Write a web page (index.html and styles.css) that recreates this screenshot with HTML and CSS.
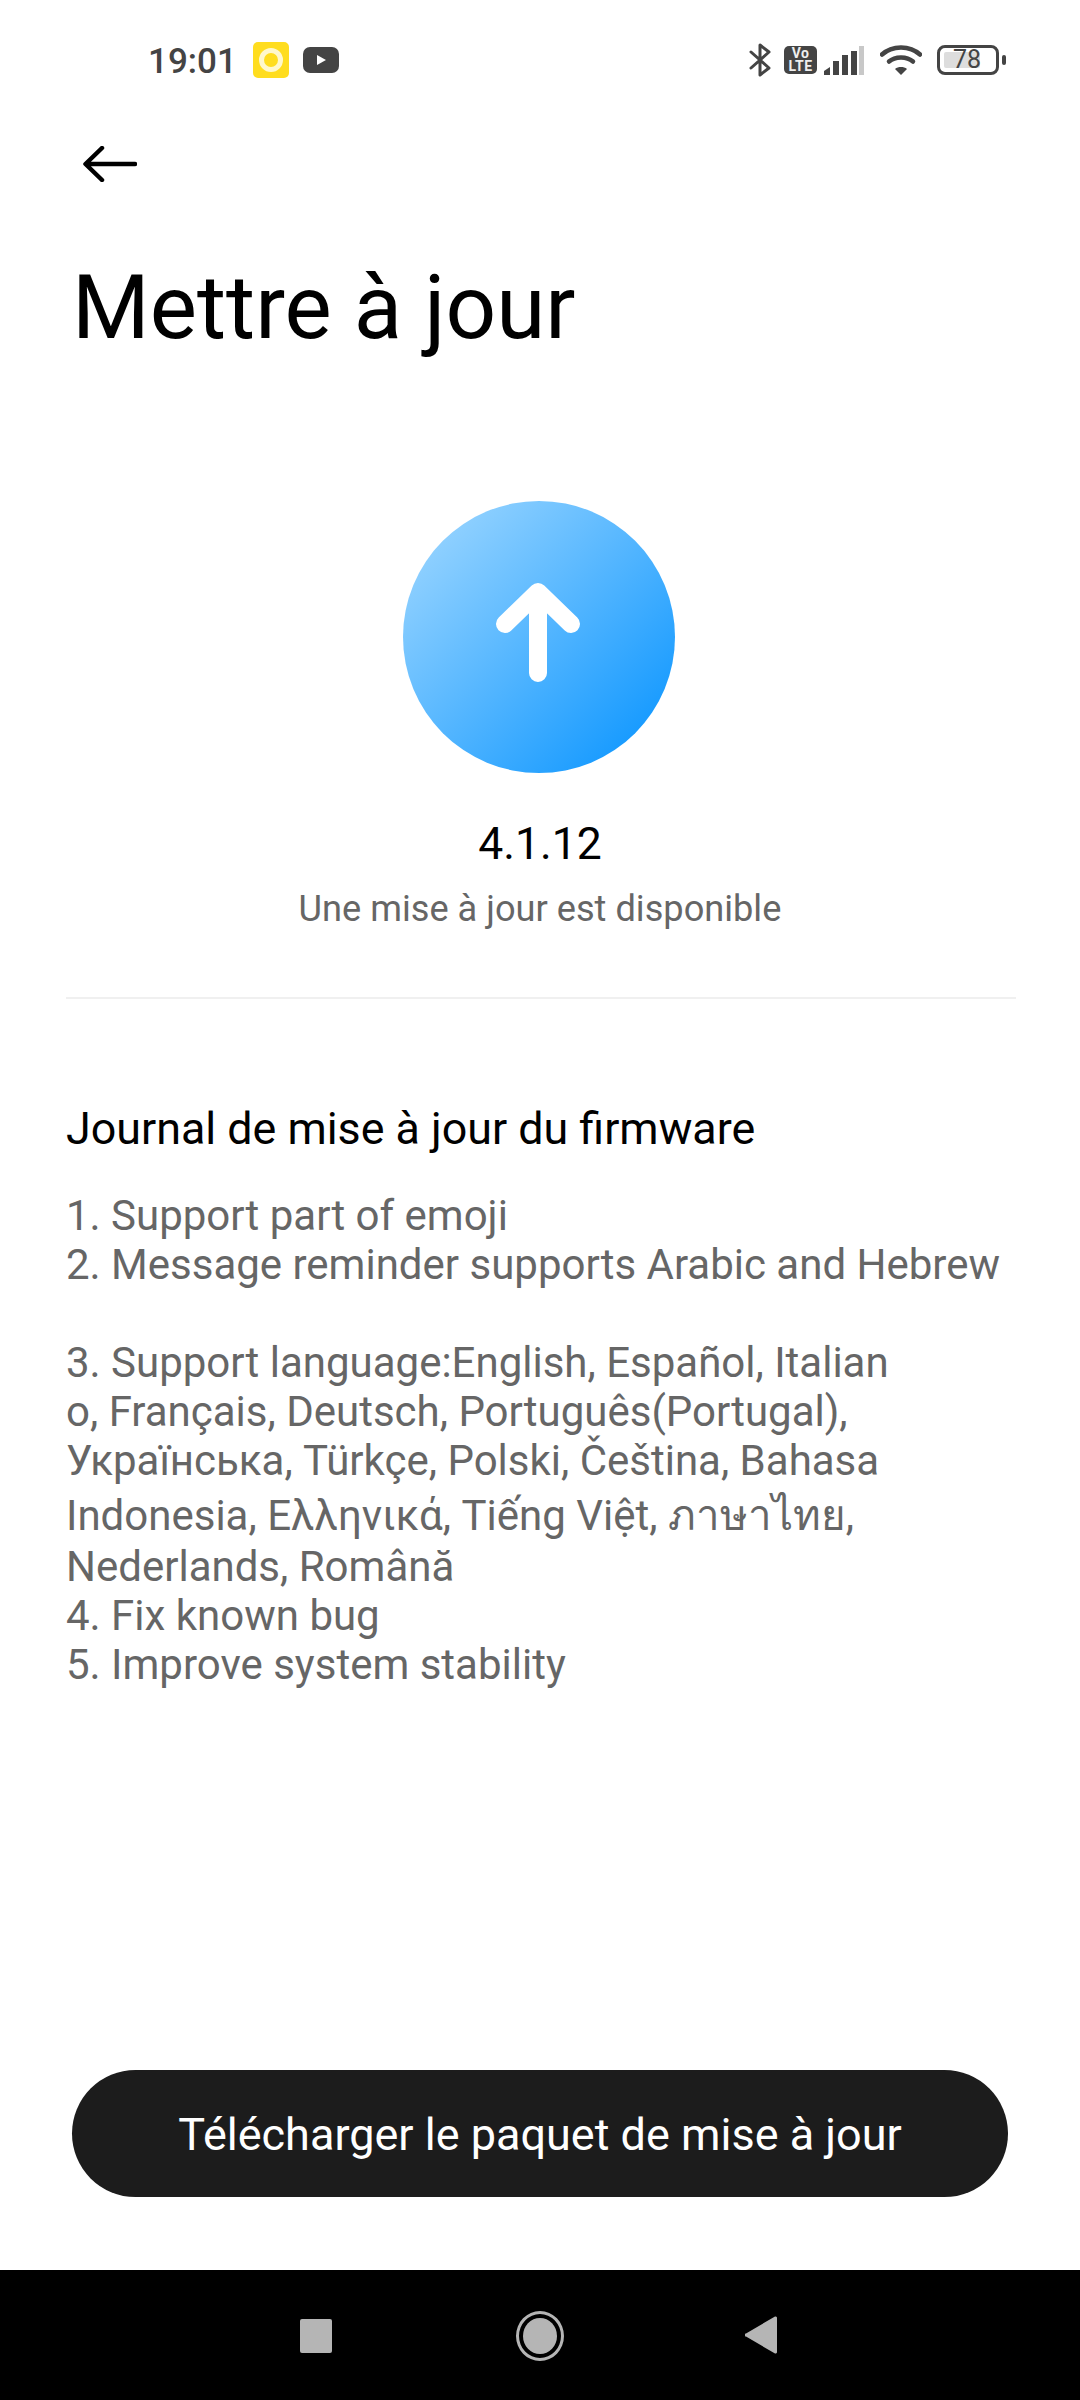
FILE: index.html
```html
<!DOCTYPE html>
<html lang="fr">
<head>
<meta charset="utf-8">
<title>Mettre à jour</title>
<link rel="stylesheet" href="styles.css">
</head>
<body>
<div class="page">
  <header class="status">
    <div class="status-left">
      <span class="time">19:01</span>
      <span class="app-yellow"><span class="app-yellow-ring"></span></span>
      <svg class="app-yt" width="36" height="26" viewBox="0 0 36 26"><rect width="36" height="26" rx="7" fill="#444"/><path d="M14 8l9 5-9 5z" fill="#fff"/></svg>
    </div>
    <div class="status-right">
      <svg class="st-bt" width="22" height="34" viewBox="0 0 22 34"><path d="M2 9l18 16-9 7V2l9 7L2 25" fill="none" stroke="#444" stroke-width="3" stroke-linecap="round" stroke-linejoin="round"/></svg>
      <span class="st-volte"><span>Vo</span><span>LTE</span></span>
      <svg class="st-signal" width="40" height="29" viewBox="0 0 40 29"><path d="M0 29v-4l6-4v8z" fill="#444"/><rect x="9" y="15" width="6" height="14" fill="#444"/><rect x="18" y="9" width="6" height="20" fill="#444"/><rect x="27" y="5" width="6" height="24" fill="#444"/><rect x="35" y="0" width="5" height="29" fill="#c8c8c8"/></svg>
      <svg class="st-wifi" width="42" height="30" viewBox="0 0 42 30"><g fill="none" stroke="#444" stroke-width="4.500" stroke-linecap="round"><path d="M2 9.500C12 0 30 0 40 9.500"/><path d="M9 16.500C15 11 27 11 33 16.500"/></g><path d="M21 30l-6-6c3.300-2.600 8.700-2.600 12 0z" fill="#444"/></svg>
      <span class="st-batt"><span class="st-level"></span><span class="st-num">78</span></span>
      <span class="st-nub"></span>
    </div>
  </header>

  <nav class="toolbar">
    <svg width="54" height="36" viewBox="0 0 54 36"><path d="M19 2L2.500 18 19 34M3 18h49" fill="none" stroke="#000" stroke-width="4.500" stroke-linecap="round" stroke-linejoin="round"/></svg>
  </nav>

  <h1 class="title">Mettre à jour</h1>

  <section class="summary">
    <svg class="badge" width="272" height="272" viewBox="0 0 272 272">
      <defs><linearGradient id="g" x1="0.12" y1="0.1" x2="0.88" y2="0.85"><stop offset="0" stop-color="#93d2ff"/><stop offset="1" stop-color="#189bff"/></linearGradient></defs>
      <circle cx="136" cy="136" r="136" fill="url(#g)"/>
      <path d="M135 172V91M102 123l33-32 33 32" fill="none" stroke="#fff" stroke-width="18" stroke-linecap="round" stroke-linejoin="round"/>
    </svg>
    <div class="version">4.1.12</div>
    <div class="avail">Une mise à jour est disponible</div>
  </section>

  <hr class="rule">

  <section class="log">
    <h2 class="log-title">Journal de mise à jour du firmware</h2>
    <div class="log-body">
      <p class="line">1. Support part of emoji</p>
      <p class="line">2. Message reminder supports Arabic and Hebrew</p>
      <p class="line">&nbsp;</p>
      <p class="line">3. Support language:English, Español, Italian</p>
      <p class="line">o, Français, Deutsch, Português(Portugal),</p>
      <p class="line">Українська, Türkçe, Polski, Čeština, Bahasa</p>
      <p class="line line-tall">Indonesia, Ελληνικά, Tiếng Việt, ภาษาไทย,</p>
      <p class="line line-after">Nederlands, Română</p>
      <p class="line">4. Fix known bug</p>
      <p class="line">5. Improve system stability</p>
    </div>
  </section>

  <div class="action"><button class="cta">Télécharger le paquet de mise à jour</button></div>

  <footer class="navbar">
    <span class="nav-square"></span>
    <span class="nav-home"><span class="nav-home-dot"></span></span>
    <svg class="nav-back" width="32" height="40" viewBox="0 0 32 40"><path d="M30 1.500a1.500 1.500 0 0 1 2 1.500v34a1.500 1.500 0 0 1-2 1.500L1 21.500a1.500 1.500 0 0 1 0-3z" fill="#b5b5b5"/></svg>
  </footer>
</div>
</body>
</html>
```

FILE: styles.css
```css
* { box-sizing: border-box; }
html, body { margin: 0; padding: 0; background: #fff; }
body { font-family: Roboto, "Noto Sans", sans-serif; }
.page { width: 1080px; height: 2400px; display: flex; flex-direction: column; overflow: hidden; }

.status { height: 80px; flex: none; display: flex; justify-content: space-between; align-items: flex-start; padding: 42px 74px 0 148px; }
.status-left, .status-right { display: flex; align-items: center; height: 36px; }
.time { font-size: 35px; font-weight: 500; color: #444; line-height: 40px; height: 36px; width: 105px; }
.app-yellow { width: 36px; height: 36px; border-radius: 5px; background: #ffdd1f; display: flex; align-items: center; justify-content: center; }
.app-yellow-ring { width: 24px; height: 24px; border-radius: 50%; border: 5px solid #fff8cc; }
.app-yt { margin-left: 14px; }
.st-bt { margin-right: 13px; }
.st-volte { width: 33px; height: 28px; border-radius: 5px; background: #444; color: #eee; font-size: 14px; font-weight: 700; line-height: 13px; letter-spacing: 0.5px; display: flex; flex-direction: column; align-items: center; justify-content: center; }
.st-signal { margin-left: 7px; }
.st-wifi { margin-left: 16px; }
.st-batt { margin-left: 15px; width: 62px; height: 30px; border: 3.500px solid #444; border-radius: 8px; position: relative; display: block; }
.st-level { position: absolute; left: 4px; top: 4px; bottom: 4px; width: 36px; background: #ddd; border-radius: 2px; }
.st-num { position: absolute; left: 13px; top: -3px; font-size: 25px; line-height: 29px; color: #444; }
.st-nub { margin-left: 3px; width: 4px; height: 10px; background: #444; border-radius: 2px; }

.toolbar { flex: none; height: 173px; padding: 66px 0 0 83px; }
.title { flex: none; margin: 0; padding: 0 0 0 72px; font-size: 89px; font-weight: 400; line-height: 110px; color: #000; height: 133px; }

.summary { flex: none; display: flex; flex-direction: column; align-items: center; padding-top: 115px; }
.badge { display: block; margin-left: -3px; }
.version { margin-top: 41px; font-size: 44.500px; line-height: 60px; color: #000; }
.avail { margin-top: 10px; font-size: 36.200px; line-height: 50px; color: #666; }

.rule { flex: none; margin: 63px 66px 0; width: 950px; border: 0; height: 2px; background: #f0f0f0; }

.log { flex: 1; padding: 102px 66px 0; }
.log-title { margin: 0; font-size: 44.800px; font-weight: 400; line-height: 56px; color: #000; }
.log-body { margin-top: 34px; font-size: 42px; color: #666; }
.line { margin: 0; line-height: 49px; white-space: nowrap; height: 49px; }
.line-tall { margin-top: 6px; }
.line-after { margin-top: 2px; }

.action { flex: none; padding: 0 72px 73px; }
.cta { display: block; width: 936px; height: 127px; border: 0; border-radius: 64px; background: #1c1c1c; color: #fff; font: 400 45px Roboto, sans-serif; padding: 2px 0 0; }

.navbar { flex: none; height: 130px; background: #000; display: flex; align-items: center; padding: 0 0 0 300px; position: relative; }
.nav-square { width: 32px; height: 34px; border-radius: 2px; background: #b5b5b5; margin-top: 1px; }
.nav-home { margin-left: 184px; width: 48px; height: 50px; border-radius: 50%; border: 3px solid #b5b5b5; display: flex; align-items: center; justify-content: center; margin-top: 1px; }
.nav-home-dot { width: 34px; height: 36px; border-radius: 50%; background: #b5b5b5; }
.nav-back { margin-left: 181px; }
```
